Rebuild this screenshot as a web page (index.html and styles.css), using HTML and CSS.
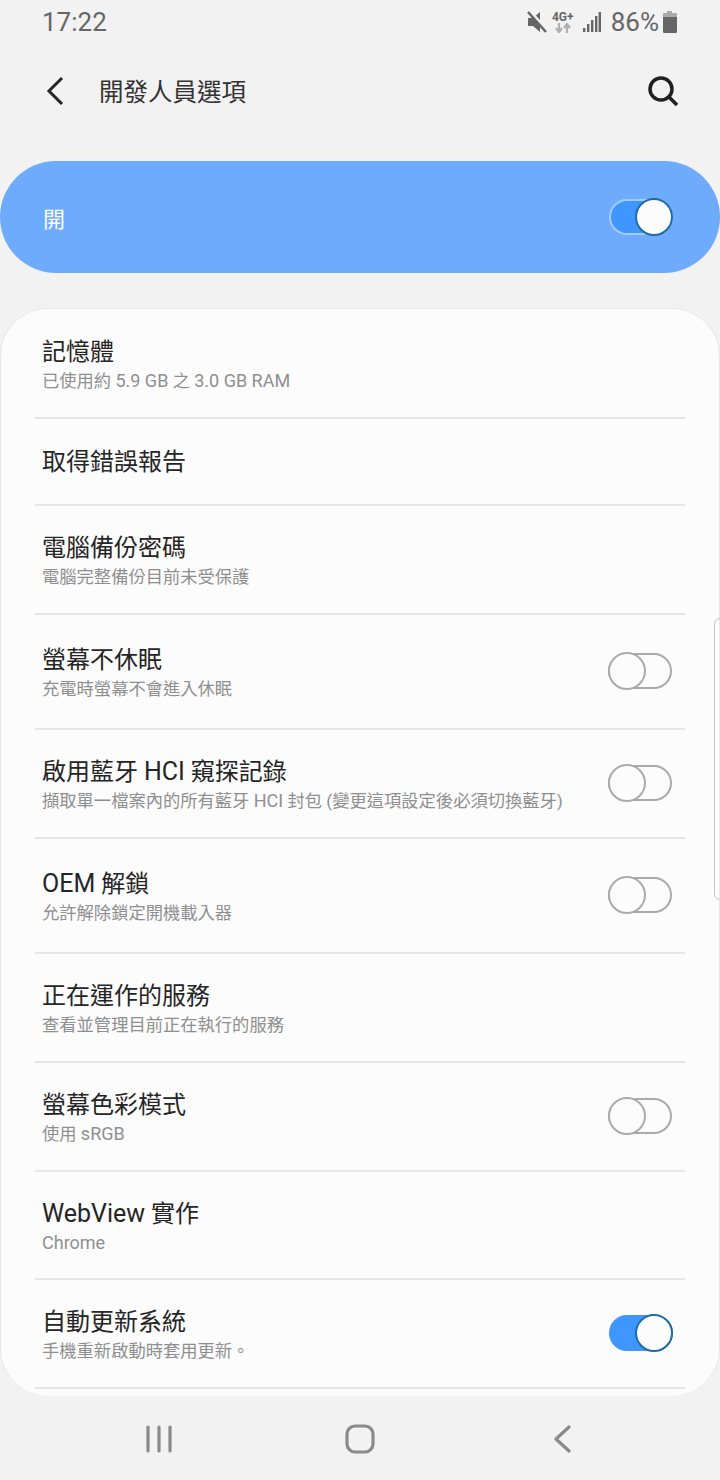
FILE: index.html
```html
<!DOCTYPE html>
<html lang="zh-Hant">
<head>
    <meta charset="UTF-8">
    <meta name="viewport" content="width=device-width, initial-scale=1.0">
    <title>開發人員選項</title>
    <link rel="stylesheet" href="styles.css">
</head>
<body>
    <div class="status-bar">
        <span class="clock">17:22</span>
        <div class="status-icons">
            <svg class="ic-mute" width="22" height="24" viewBox="0 0 22 24">
                <path d="M1 8h5l7-6v20l-7-6H1z" fill="#666"/>
                <path d="M3 2l18 20" stroke="#f2f2f2" stroke-width="4"/>
                <path d="M1 2l18 20" stroke="#666" stroke-width="2.600"/>
            </svg>
            <div class="net">
                <span class="net-label">4G+</span>
                <svg width="16" height="10" viewBox="0 0 16 10">
                    <path d="M4 0v9M1 5l3 4 3-4" stroke="#b0b0b0" stroke-width="2.200" fill="none"/>
                    <path d="M12 10V1M9 5l3-4 3 4" stroke="#b0b0b0" stroke-width="2.200" fill="none"/>
                </svg>
            </div>
            <svg class="ic-signal" width="20" height="22" viewBox="0 0 20 22">
                <path d="M1 17h2.400v4H1zM5 13h2.400v8H5zM9 9h2.400v12H9zM13 5h2.400v16H13z" fill="#666"/>
                <path d="M16.600 1H19v20h-2.400z" fill="#666"/>
            </svg>
            <span class="battery-pct">86%</span>
            <svg width="16" height="22" viewBox="0 0 16 22">
                <path d="M5 0h5v2h4a1 1 0 0 1 1 1v3H1V3a1 1 0 0 1 1-1h3z" fill="#aaa"/>
                <path d="M1 6h14v15a1 1 0 0 1-1 1H2a1 1 0 0 1-1-1z" fill="#666"/>
            </svg>
        </div>
    </div>

    <div class="app-bar">
        <svg class="back" width="20" height="30" viewBox="0 0 20 30">
            <path d="M17 2L4 15l13 13" stroke="#252525" stroke-width="3" fill="none"/>
        </svg>
        <h1>開發人員選項</h1>
        <svg class="search" width="34" height="34" viewBox="0 0 34 34">
            <circle cx="15" cy="15" r="11" stroke="#202020" stroke-width="3.500" fill="none"/>
            <path d="M23 23l8 8" stroke="#202020" stroke-width="3.500"/>
        </svg>
    </div>

    <div class="master">
        <span>開</span>
        <div class="switch on master-switch"><i></i></div>
    </div>

    <div class="card">
        <div class="row">
            <div class="text"><div class="title">記憶體</div><div class="sub">已使用約 <span class="lat">5.9 GB</span> 之 <span class="lat">3.0 GB RAM</span></div></div>
        </div>
        <div class="row single">
            <div class="text"><div class="title">取得錯誤報告</div></div>
        </div>
        <div class="row">
            <div class="text"><div class="title">電腦備份密碼</div><div class="sub">電腦完整備份目前未受保護</div></div>
        </div>
        <div class="row tall">
            <div class="text"><div class="title">螢幕不休眠</div><div class="sub">充電時螢幕不會進入休眠</div></div>
            <div class="switch"><i></i></div>
        </div>
        <div class="row">
            <div class="text"><div class="title">啟用藍牙 <span class="lat">HCI</span> 窺探記錄</div><div class="sub">擷取單一檔案內的所有藍牙 <span class="lat">HCI</span> 封包 (變更這項設定後必須切換藍牙)</div></div>
            <div class="switch"><i></i></div>
        </div>
        <div class="row tall">
            <div class="text"><div class="title"><span class="lat">OEM</span> 解鎖</div><div class="sub">允許解除鎖定開機載入器</div></div>
            <div class="switch"><i></i></div>
        </div>
        <div class="row">
            <div class="text"><div class="title">正在運作的服務</div><div class="sub">查看並管理目前正在執行的服務</div></div>
        </div>
        <div class="row">
            <div class="text"><div class="title">螢幕色彩模式</div><div class="sub">使用 <span class="lat">sRGB</span></div></div>
            <div class="switch"><i></i></div>
        </div>
        <div class="row short">
            <div class="text"><div class="title"><span class="lat">WebView</span> 實作</div><div class="sub"><span class="lat">Chrome</span></div></div>
        </div>
        <div class="row">
            <div class="text"><div class="title">自動更新系統</div><div class="sub">手機重新啟動時套用更新。</div></div>
            <div class="switch on"><i></i></div>
        </div>
    </div>

    <div class="scroll-thumb"></div>

    <div class="nav-bar">
        <svg width="28" height="28" viewBox="0 0 28 28">
            <path d="M3 2v24M14 2v24M25 2v24" stroke="#8a8a8a" stroke-width="3.200" stroke-linecap="round"/>
        </svg>
        <svg width="30" height="30" viewBox="0 0 30 30">
            <rect x="2" y="2" width="26" height="26" rx="8" stroke="#8a8a8a" stroke-width="3.200" fill="none"/>
        </svg>
        <svg width="18" height="28" viewBox="0 0 18 28">
            <path d="M16 2L3 14l13 12" stroke="#8a8a8a" stroke-width="3.200" stroke-linecap="round" stroke-linejoin="round" fill="none"/>
        </svg>
    </div>
</body>
</html>
```

FILE: styles.css
```css
:root {
    --background-color: #f2f2f2;
    --card-color: #fcfcfc;
    --text-color: #252525;
    --sub-color: #8f8f8f;
    --divider-color: #e6e6e6;
    --blue-banner: #6eabfd;
    --blue-switch: #3f96fe;
}

html, body {
    height: 100%;
}

body {
    margin: 0;
    width: 720px;
    height: 1480px;
    position: relative;
    overflow: hidden;
    background-color: var(--background-color);
    color: var(--text-color);
    font-family: Roboto, "Noto Sans CJK TC", sans-serif;
}

.status-bar {
    height: 44px;
    display: flex;
    align-items: center;
    justify-content: space-between;
    padding: 0 42px 0 42px;
    color: #666;
}

.clock {
    font-size: 26px;
}

.status-icons {
    display: flex;
    align-items: center;
}

.ic-mute {
    margin-right: 2px;
}

.net {
    display: flex;
    flex-direction: column;
    align-items: center;
    width: 24px;
    margin-right: 7px;
}

.net-label {
    font-size: 12px;
    line-height: 12px;
    font-weight: 700;
}

.ic-signal {
    margin-right: 9px;
}

.battery-pct {
    font-size: 26px;
    margin-right: 3px;
}

.app-bar {
    height: 94px;
    display: flex;
    align-items: center;
    padding: 0 40px 0 45px;
}

.app-bar h1 {
    flex: 1;
    margin: 0 0 2px 34px;
    font-size: 24.500px;
    font-weight: 400;
    color: #333;
}

.master {
    margin-top: 23px;
    height: 112px;
    border-radius: 56px;
    background-color: var(--blue-banner);
    display: flex;
    align-items: center;
    justify-content: space-between;
    padding: 0 47px 0 43px;
    color: #fff;
    font-size: 22px;
}

.card {
    margin-top: 35px;
    height: 1088px;
    box-sizing: border-box;
    overflow: hidden;
    background-color: var(--card-color);
    border-radius: 48px;
    border: 1px solid #e8e8e8;
    border-bottom: none;
    padding: 1px 34px 0;
}

.row {
    height: 109px;
    box-sizing: border-box;
    border-bottom: 2px solid var(--divider-color);
    display: flex;
    align-items: center;
    justify-content: space-between;
    padding: 3px 13px 0 7px;
}

.row.single {
    height: 87px;
    padding-top: 0;
}

.row.tall {
    height: 115px;
}

.row.short {
    height: 108px;
}

.title {
    font-size: 24px;
    line-height: 30px;
}

.title .lat {
    font-size: 25px;
}

.sub {
    font-size: 17.300px;
    line-height: 24px;
    margin-top: 2px;
    color: var(--sub-color);
}

.sub .lat {
    font-size: 18px;
}

.switch {
    position: relative;
    flex: none;
    width: 64px;
    height: 36px;
    box-sizing: border-box;
    border: 2px solid #ababab;
    border-radius: 18px;
    margin-top: -5px;
}

.switch i {
    position: absolute;
    left: -2px;
    top: -3px;
    width: 38px;
    height: 38px;
    box-sizing: border-box;
    border: 2px solid #ababab;
    border-radius: 50%;
    background-color: var(--card-color);
}

.switch.on {
    background-color: var(--blue-switch);
    border-color: var(--blue-switch);
    margin-right: -1px;
}

.switch.on i {
    left: auto;
    right: -2px;
    border-color: #1c6ca8;
}

.switch.master-switch {
    margin: 0;
    border-color: #a3cbfd;
}

.scroll-thumb {
    position: absolute;
    right: -6px;
    top: 618px;
    width: 12px;
    height: 282px;
    box-sizing: border-box;
    border: 1px solid #c6c6c6;
    border-radius: 8px;
}

.nav-bar {
    position: absolute;
    left: 0;
    right: 0;
    bottom: 0;
    height: 84px;
    display: flex;
    align-items: center;
    padding-top: 2px;
    box-sizing: border-box;
}

.nav-bar svg:nth-child(1) {
    margin-left: 145px;
}

.nav-bar svg:nth-child(2) {
    margin-left: 172px;
}

.nav-bar svg:nth-child(3) {
    margin-left: 178px;
}
```
